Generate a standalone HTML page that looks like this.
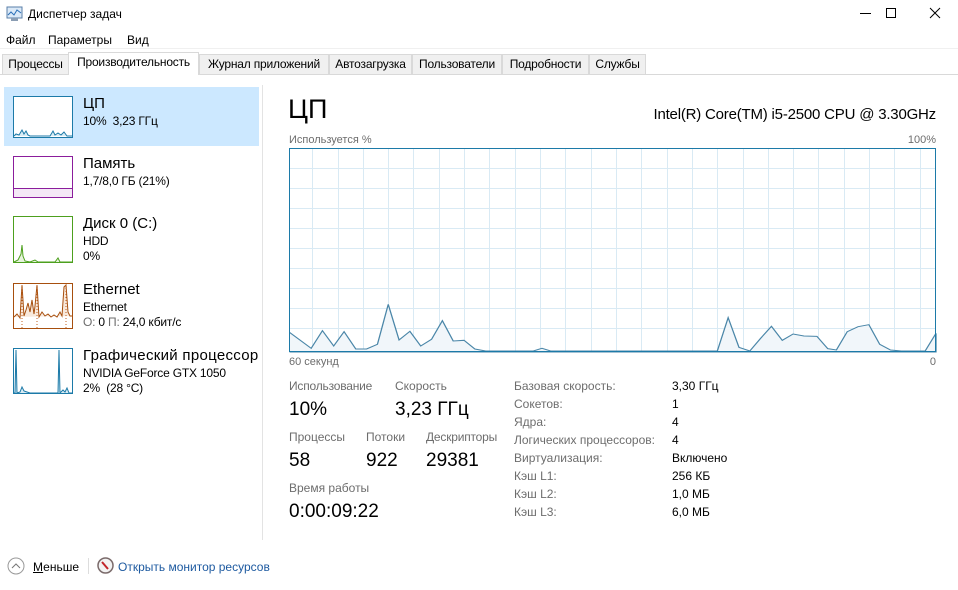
<!DOCTYPE html>
<html><head><meta charset="utf-8"><style>
*{margin:0;padding:0;box-sizing:border-box}
body{width:958px;height:590px;background:#fff;font-family:"Liberation Sans","DejaVu Sans",sans-serif;color:#000;position:relative;overflow:hidden;font-size:12px}
.a{position:absolute;white-space:nowrap}
.tab{position:absolute;top:54px;height:20px;background:#f0f0f0;border:1px solid #d9d9d9;border-bottom:none;font-size:12px;line-height:19px;text-align:center;letter-spacing:-0.2px}
.g{color:#6d6d6d}
.t{font-size:15px}
.s{font-size:12px;letter-spacing:-0.2px}
.big{font-size:19px}
</style></head><body>
<svg class="a" style="left:6px;top:6px" width="18" height="16"><rect x="1" y="1" width="15" height="11" fill="#dbe9f7" stroke="#5a7fa8"/><polyline points="2,9 5,6 8,9 11,4 15,7" fill="none" stroke="#2a6fb8"/><rect x="5" y="12" width="7" height="3" fill="#8a9db3"/></svg>
<div class="a" style="left:28px;top:7px;font-size:12px">Диспетчер задач</div>
<div class="a" style="left:860px;top:13px;width:11px;height:1px;background:#000"></div>
<div class="a" style="left:886px;top:8px;width:10px;height:10px;border:1px solid #000"></div>
<svg class="a" style="left:929px;top:7px" width="12" height="12"><path d="M1 1L11 11M11 1L1 11" stroke="#000" stroke-width="1"/></svg>
<div class="a" style="left:6px;top:33px">Файл</div>
<div class="a" style="left:48px;top:33px">Параметры</div>
<div class="a" style="left:127px;top:33px">Вид</div>
<div class="a" style="left:0;top:48px;width:958px;height:1px;background:#f0f0f0"></div>
<div class="a" style="left:0;top:74px;width:958px;height:1px;background:#d9d9d9"></div>
<div class="tab" style="left:2px;width:67px">Процессы</div>
<div class="tab" style="left:68px;top:52px;height:23px;width:131px;background:#fff">Производительность</div>
<div class="tab" style="left:199px;width:130px">Журнал приложений</div>
<div class="tab" style="left:329px;width:83px">Автозагрузка</div>
<div class="tab" style="left:412px;width:90px">Пользователи</div>
<div class="tab" style="left:502px;width:87px">Подробности</div>
<div class="tab" style="left:589px;width:57px">Службы</div>

<div class="a" style="left:4px;top:87px;width:255px;height:59px;background:#cce8ff"></div>
<div class="a" style="left:262px;top:85px;width:1px;height:455px;background:#e3e3e3"></div>

<svg class="a" style="left:0;top:0" width="260" height="400">
<rect x="13.5" y="96.5" width="59" height="41" fill="#fff" stroke="#1c7aa8"/>
<polyline points="14,136 16,134 19,135 22,130 24,134 26,131 28,135 30,136 50,136 53,131 55,135 58,133 61,135 64,132 67,136 72,136" fill="#d9ecf5" stroke="#1c7aa8"/>
<rect x="13.5" y="156.5" width="59" height="41" fill="#fff" stroke="#8b1d9c"/>
<rect x="14" y="188" width="58" height="9" fill="#f4e8f6"/><line x1="14" y1="188.5" x2="72" y2="188.5" stroke="#8b1d9c"/>
<rect x="13.5" y="216.5" width="59" height="46" fill="#fff" stroke="#4da01e"/>
<polyline points="14,262 18,260 21,254 22,245 23,256 25,261 30,262 35,260 38,262 55,262 58,258 60,262 72,262" fill="#e6f3dc" stroke="#4da01e"/>
<rect x="13.5" y="283.5" width="59" height="45" fill="#fff" stroke="#a74f0e"/>
<polyline points="14,317 17,314 20,318 22,285 24,316 26,310 28,303 30,312 32,300 34,314 35,306 37,285 39,317 42,312 45,316 48,314 51,317 54,315 57,317 60,312 62,316 64,287 66,285 68,312 70,316 72,316" fill="#f8e9dc" stroke="#a74f0e"/>
<line x1="22" y1="285" x2="22" y2="328" stroke="#c06020" stroke-dasharray="1,2"/>
<line x1="37" y1="285" x2="37" y2="328" stroke="#c06020" stroke-dasharray="1,2"/>
<line x1="66" y1="285" x2="66" y2="328" stroke="#c06020" stroke-dasharray="1,2"/>
<rect x="13.5" y="348.5" width="59" height="45" fill="#fff" stroke="#1c7aa8"/>
<polyline points="14,393 15,393 16,350 17,393 20,392 22,387 24,391 27,392 30,393 58,393 59,350 60,393 63,390 65,392 67,388 69,393 72,393" fill="#d9ecf5" stroke="#1c7aa8"/>
</svg>
<div class="a t" style="left:83px;top:95px">ЦП</div>
<div class="a s" style="left:83px;top:114px">10%&nbsp; 3,23 ГГц</div>
<div class="a t" style="left:83px;top:155px">Память</div>
<div class="a s" style="left:83px;top:174px">1,7/8,0 ГБ (21%)</div>
<div class="a t" style="left:83px;top:215px">Диск 0 (C:)</div>
<div class="a s" style="left:83px;top:234px">HDD</div>
<div class="a s" style="left:83px;top:249px">0%</div>
<div class="a t" style="left:83px;top:281px">Ethernet</div>
<div class="a s" style="left:83px;top:300px">Ethernet</div>
<div class="a s" style="left:83px;top:315px"><span class="g">О:</span> 0 <span class="g">П:</span> 24,0 кбит/с</div>
<div class="a t" style="left:83px;top:347px;letter-spacing:0.3px">Графический процессор</div>
<div class="a s" style="left:83px;top:366px">NVIDIA GeForce GTX 1050</div>
<div class="a s" style="left:83px;top:381px">2%&nbsp; (28 °C)</div>

<div class="a" style="left:288px;top:94px;font-size:27px">ЦП</div>
<div class="a" style="left:600px;top:106px;font-size:15px;width:336px;text-align:right;letter-spacing:-0.2px">Intel(R) Core(TM) i5-2500 CPU @ 3.30GHz</div>
<div class="a g" style="left:289px;top:134px;font-size:11px">Используется %</div>
<div class="a g" style="left:900px;top:134px;font-size:11px;width:36px;text-align:right">100%</div>
<svg class="a" style="left:0;top:0" width="958" height="400">
<g stroke="#d9eaf4" stroke-width="1">
<line x1="289" y1="168.5" x2="936" y2="168.5"/><line x1="289" y1="188.5" x2="936" y2="188.5"/><line x1="289" y1="208.5" x2="936" y2="208.5"/><line x1="289" y1="228.5" x2="936" y2="228.5"/><line x1="289" y1="248.5" x2="936" y2="248.5"/><line x1="289" y1="268.5" x2="936" y2="268.5"/><line x1="289" y1="288.5" x2="936" y2="288.5"/><line x1="289" y1="308.5" x2="936" y2="308.5"/><line x1="289" y1="328.5" x2="936" y2="328.5"/>
<line x1="312.5" y1="148" x2="312.5" y2="352"/><line x1="338.5" y1="148" x2="338.5" y2="352"/><line x1="363.5" y1="148" x2="363.5" y2="352"/><line x1="388.5" y1="148" x2="388.5" y2="352"/><line x1="413.5" y1="148" x2="413.5" y2="352"/><line x1="439.5" y1="148" x2="439.5" y2="352"/><line x1="464.5" y1="148" x2="464.5" y2="352"/><line x1="489.5" y1="148" x2="489.5" y2="352"/><line x1="515.5" y1="148" x2="515.5" y2="352"/><line x1="540.5" y1="148" x2="540.5" y2="352"/><line x1="565.5" y1="148" x2="565.5" y2="352"/><line x1="591.5" y1="148" x2="591.5" y2="352"/><line x1="616.5" y1="148" x2="616.5" y2="352"/><line x1="641.5" y1="148" x2="641.5" y2="352"/><line x1="667.5" y1="148" x2="667.5" y2="352"/><line x1="692.5" y1="148" x2="692.5" y2="352"/><line x1="717.5" y1="148" x2="717.5" y2="352"/><line x1="743.5" y1="148" x2="743.5" y2="352"/><line x1="768.5" y1="148" x2="768.5" y2="352"/><line x1="793.5" y1="148" x2="793.5" y2="352"/><line x1="818.5" y1="148" x2="818.5" y2="352"/><line x1="844.5" y1="148" x2="844.5" y2="352"/><line x1="869.5" y1="148" x2="869.5" y2="352"/><line x1="894.5" y1="148" x2="894.5" y2="352"/><line x1="920.5" y1="148" x2="920.5" y2="352"/>
</g>
<g transform="translate(280,280) scale(0.4330,0.3333)">
<polyline points="22,157 72,205 98,152 124,198 148,155 175,207 200,207 225,193 250,73 275,180 300,154 325,198 350,178 375,122 400,183 425,181 450,207 475,213 585,213 605,205 625,213 1010,213 1035,113 1060,202 1085,213 1110,175 1135,139 1160,181 1185,162 1210,168 1240,169 1265,206 1285,210 1310,155 1335,140 1360,134 1385,193 1410,210 1435,213 1490,213 1515,160 1515,216 22,216" fill="#f1f6fa" stroke="#4a86a8" stroke-width="3"/>
</g>
<rect x="289.5" y="148.5" width="646" height="203" fill="none" stroke="#1c7aa8"/>
</svg>
<div class="a g" style="left:289px;top:356px;font-size:11px">60 секунд</div>
<div class="a g" style="left:926px;top:356px;font-size:11px;width:10px;text-align:right">0</div>

<div class="a g" style="left:289px;top:379px;font-size:12px;letter-spacing:-0.2px">Использование</div>
<div class="a g" style="left:395px;top:379px;font-size:12px">Скорость</div>
<div class="a big" style="left:289px;top:399px">10%</div>
<div class="a big" style="left:395px;top:399px">3,23 ГГц</div>
<div class="a g" style="left:289px;top:430px">Процессы</div>
<div class="a g" style="left:366px;top:430px">Потоки</div>
<div class="a g" style="left:426px;top:430px;letter-spacing:-0.2px">Дескрипторы</div>
<div class="a big" style="left:289px;top:450px">58</div>
<div class="a big" style="left:366px;top:450px">922</div>
<div class="a big" style="left:426px;top:450px">29381</div>
<div class="a g" style="left:289px;top:481px">Время работы</div>
<div class="a big" style="left:289px;top:501px">0:00:09:22</div>

<div class="a g" style="left:514px;top:377px;line-height:18px">Базовая скорость:<br>Сокетов:<br>Ядра:<br>Логических процессоров:<br>Виртуализация:<br>Кэш L1:<br>Кэш L2:<br>Кэш L3:</div>
<div class="a" style="left:672px;top:377px;line-height:18px">3,30 ГГц<br>1<br>4<br>4<br>Включено<br>256 КБ<br>1,0 МБ<br>6,0 МБ</div>

<svg class="a" style="left:7px;top:557px" width="18" height="18"><circle cx="9" cy="9" r="8" fill="#fff" stroke="#999"/><path d="M5 11L9 7L13 11" fill="none" stroke="#777"/></svg>
<div class="a" style="left:33px;top:560px"><u>М</u>еньше</div>
<div class="a" style="left:88px;top:558px;width:1px;height:16px;background:#ddd"></div>
<svg class="a" style="left:97px;top:557px" width="17" height="17"><circle cx="8.5" cy="8.5" r="7.5" fill="#f3f3f3" stroke="#7a6a6a" stroke-width="1.5"/><path d="M5 5L11 12" stroke="#c2262b" stroke-width="2"/></svg>
<div class="a" style="left:118px;top:560px;color:#1e5aa0">Открыть монитор ресурсов</div>
</body></html>
